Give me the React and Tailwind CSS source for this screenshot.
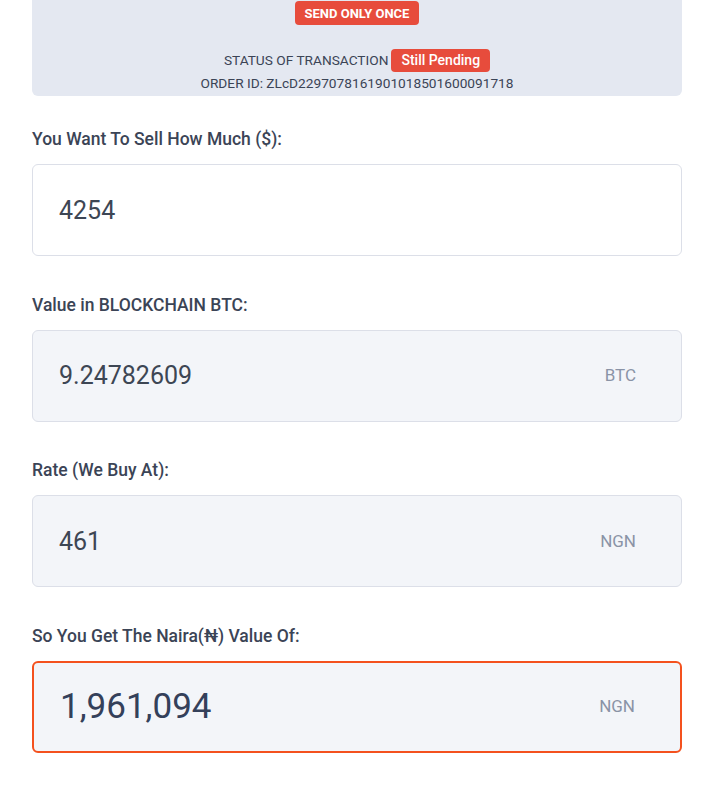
export default function App() {
  const fields = [
    { label: 'You Want To Sell How Much ($):', value: '4254', unit: null, tone: 'plain' },
    { label: 'Value in BLOCKCHAIN BTC:', value: '9.24782609', unit: 'BTC', tone: 'muted' },
    { label: 'Rate (We Buy At):', value: '461', unit: 'NGN', tone: 'muted' },
    { label: 'So You Get The Naira(\u20A6) Value Of:', value: '1,961,094', unit: 'NGN', tone: 'total' },
  ];

  return (
    <div className="min-h-screen bg-white pl-8 pr-[25px] pb-10 text-[#3b4456]" style={{ fontFamily: 'Roboto, "Noto Sans", sans-serif' }}>
      {/* Transaction status */}
      <div className="h-24 rounded-b-md bg-[#e4e8f1] flex flex-col items-center pt-px">
        <span className="h-6 px-2.5 rounded bg-[#e74c3c] text-white text-[13px] font-bold leading-[25px]">SEND ONLY ONCE</span>
        <div className="mt-[23px] flex items-center text-[13.7px] leading-6">
          <span>STATUS OF TRANSACTION</span>
          <span className="ml-[3px] h-[23px] px-2.5 rounded bg-[#e74c3c] text-white text-[14px] font-medium leading-[23px]">Still Pending</span>
        </div>
        <div className="text-[13.7px] leading-6 -mt-[1px]">ORDER ID: ZLcD2297078161901018501600091718</div>
      </div>

      <div className="pt-[31px]">
        {fields.map((f, i) => (
          <div key={i} className={i < fields.length - 1 ? 'mb-[36.5px]' : ''}>
            <div className="text-[17.5px] font-medium leading-6 mb-[13px]">{f.label}</div>
            <div
              className={`h-[92px] rounded-md flex items-center justify-between pl-[26px] pr-[45px] ${
                f.tone === 'plain'
                  ? 'bg-white border border-[#dcdfe8]'
                  : f.tone === 'total'
                  ? 'bg-[#f3f5f9] border-2 border-[#f4511e]'
                  : 'bg-[#f3f5f9] border border-[#dcdfe8]'
              }`}
            >
              <span className={f.tone === 'total' ? 'text-[35px] text-[#34405a] pt-px' : 'text-[25px] text-[#3d4654] pt-px'}>{f.value}</span>
              {f.unit && <span className="text-[17px] text-[#8a93a6] pt-px">{f.unit}</span>}
            </div>
          </div>
        ))}
      </div>
    </div>
  );
}
